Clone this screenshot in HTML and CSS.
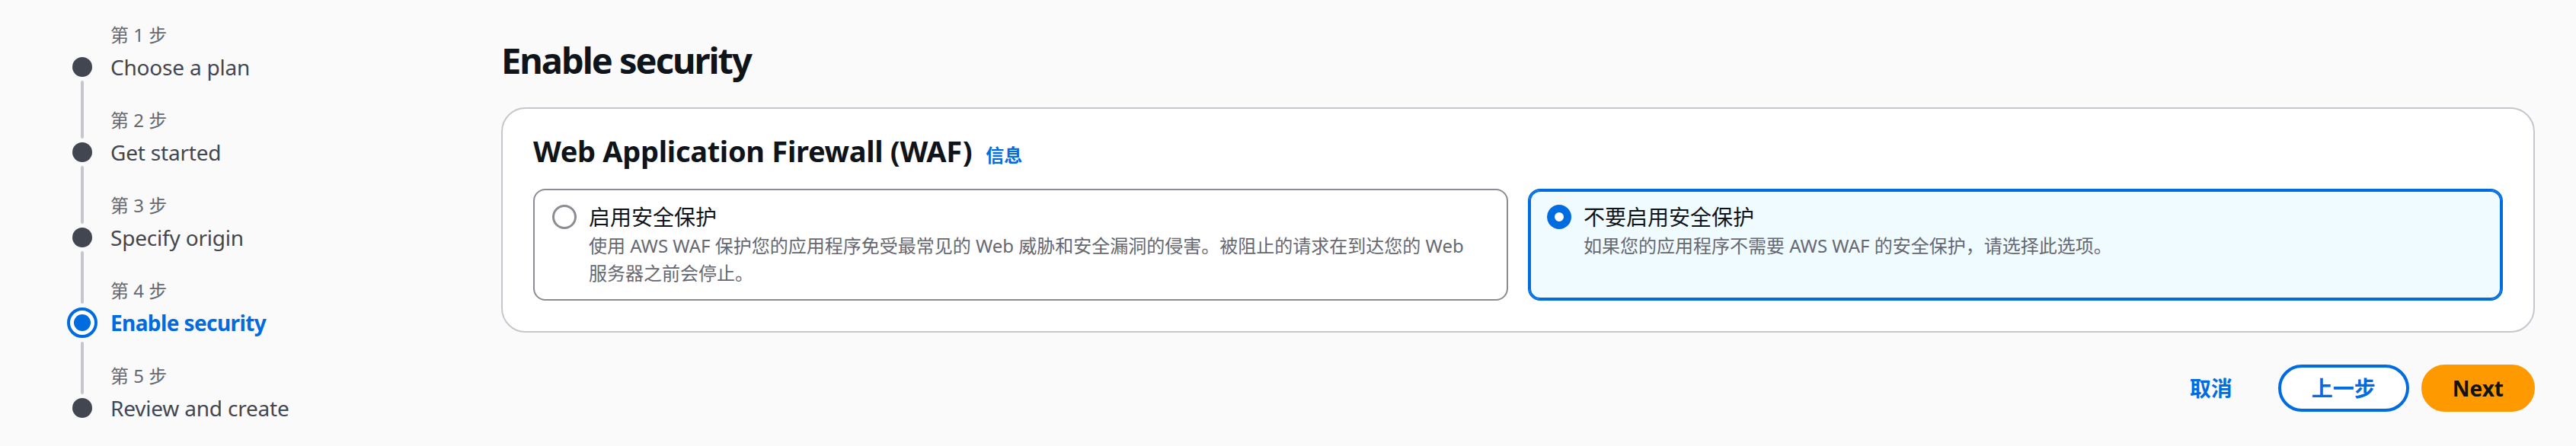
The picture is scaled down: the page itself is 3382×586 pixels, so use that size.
FILE: index.html
```html
<!DOCTYPE html>
<html lang="zh-CN">
<head>
<meta charset="utf-8">
<title>Enable security</title>
<link rel="stylesheet" href="styles.css">
</head>
<body>
<div class="page">
  <nav class="steps">
    <ol class="step-list">
      <li class="step">
        <span class="step-label">第 1 步</span>
        <span class="marker"></span>
        <span class="step-title">Choose a plan</span>
      </li>
      <li class="step">
        <span class="step-label">第 2 步</span>
        <span class="marker"></span>
        <span class="step-title">Get started</span>
      </li>
      <li class="step before-active">
        <span class="step-label">第 3 步</span>
        <span class="marker"></span>
        <span class="step-title">Specify origin</span>
      </li>
      <li class="step active">
        <span class="step-label">第 4 步</span>
        <span class="marker"><span class="marker-dot"></span></span>
        <span class="step-title">Enable security</span>
      </li>
      <li class="step last">
        <span class="step-label">第 5 步</span>
        <span class="marker"></span>
        <span class="step-title">Review and create</span>
      </li>
    </ol>
  </nav>
  <main class="content">
    <h1 class="page-title">Enable security</h1>
    <section class="card">
      <div class="card-header">
        <h2 class="card-title">Web Application Firewall (WAF)</h2>
        <a class="info-link">信息</a>
      </div>
      <div class="tiles">
        <div class="tile">
          <span class="radio"></span>
          <div class="tile-text">
            <div class="tile-title">启用安全保护</div>
            <div class="tile-desc">使用 AWS WAF 保护您的应用程序免受最常见的 Web 威胁和安全漏洞的侵害。被阻止的请求在到达您的 Web 服务器之前会停止。</div>
          </div>
        </div>
        <div class="tile selected">
          <span class="radio checked"></span>
          <div class="tile-text">
            <div class="tile-title">不要启用安全保护</div>
            <div class="tile-desc">如果您的应用程序不需要 AWS WAF 的安全保护，请选择此选项。</div>
          </div>
        </div>
      </div>
    </section>
    <div class="actions">
      <button class="btn btn-link">取消</button>
      <button class="btn btn-normal">上一步</button>
      <button class="btn btn-primary">Next</button>
    </div>
  </main>
</div>
</body>
</html>
```
FILE: styles.css
```css
* { box-sizing: border-box; }

html, body {
  margin: 0;
  padding: 0;
  background: #fafafa;
}

body {
  font-family: "Noto Sans", "Noto Sans CJK SC", sans-serif;
  color: #0f141a;
  width: 3382px;
  height: 586px;
  overflow: hidden;
}

.page {
  display: grid;
  grid-template-columns: 658px 1fr;
  padding-right: 54px;
}

/* ---------- Steps sidebar ---------- */
.steps {
  padding: 26px 0 0 90px;
}

.step-list {
  list-style: none;
  margin: 0;
  padding: 0;
}

.step {
  position: relative;
  display: grid;
  grid-template-columns: 36px 1fr;
  grid-template-rows: 40px 44px;
  column-gap: 19px;
  margin-bottom: 28px;
}

.step.last { margin-bottom: 0; }

.step::after {
  content: "";
  position: absolute;
  left: 16px;
  top: 80px;
  width: 4px;
  height: 76px;
  background: #c6c6cd;
  border-radius: 2px;
}

.step.before-active::after { height: 69px; }
.step.active::after { top: 87px; height: 69px; }
.step.last::after { display: none; }

.step-label {
  grid-column: 2;
  grid-row: 1;
  font-size: 24px;
  line-height: 40px;
  color: #656871;
  white-space: nowrap;
}

.marker {
  grid-column: 1;
  grid-row: 2;
  justify-self: center;
  align-self: center;
  width: 26px;
  height: 26px;
  border-radius: 50%;
  background: #424650;
}

.step-title {
  grid-column: 2;
  grid-row: 2;
  font-size: 28px;
  line-height: 44px;
  letter-spacing: -0.2px;
  color: #424650;
  white-space: nowrap;
}

.step.active .marker {
  width: 40px;
  height: 40px;
  background: #ffffff;
  border: 4px solid #006ce0;
  display: flex;
  align-items: center;
  justify-content: center;
}

.marker-dot {
  width: 22px;
  height: 22px;
  border-radius: 50%;
  background: #006ce0;
}

.step.active .step-title {
  color: #006ce0;
  font-weight: 700;
  letter-spacing: -0.6px;
}

/* ---------- Content ---------- */
.content {
  padding-top: 51px;
}

.page-title {
  margin: 0;
  font-size: 47px;
  line-height: 56px;
  font-weight: 700;
  letter-spacing: -2px;
  color: #0f141a;
}

.card {
  margin-top: 34px;
  background: #ffffff;
  border: 2px solid #c6c6cd;
  border-radius: 32px;
  padding: 33px 40px 40px;
}

.card-header {
  display: flex;
  align-items: baseline;
  gap: 18px;
  margin-bottom: 28px;
}

.card-title {
  margin: 0;
  font-size: 38px;
  line-height: 44px;
  font-weight: 700;
  letter-spacing: -0.3px;
  color: #0f141a;
}

.info-link {
  font-size: 24px;
  font-weight: 700;
  color: #006ce0;
}

.tiles {
  display: grid;
  grid-template-columns: 1fr 1fr;
  gap: 26px;
}

.tile {
  display: flex;
  align-items: flex-start;
  gap: 16px;
  border: 2px solid #8c8c94;
  border-radius: 16px;
  background: #ffffff;
  padding: 15px 24px 16px 23px;
}

.tile.selected {
  border-color: #006ce0;
  box-shadow: inset 0 0 0 2px #006ce0;
  background: #f0fbff;
}

.radio {
  flex: none;
  width: 32px;
  height: 32px;
  margin-top: 4px;
  border-radius: 50%;
  border: 3px solid #8c8c94;
  background: #ffffff;
}

.radio.checked {
  border: 10px solid #006ce0;
}

.tile-title {
  font-size: 28px;
  line-height: 40px;
  color: #0f141a;
}

.tile-desc {
  font-size: 24px;
  line-height: 36px;
  color: #656871;
  word-break: keep-all;
}

/* ---------- Actions ---------- */
.actions {
  display: flex;
  justify-content: flex-end;
  gap: 16px;
  margin-top: 42px;
}

.btn {
  font-family: "Noto Sans", "Noto Sans CJK SC", sans-serif;
  font-size: 28px;
  font-weight: 700;
  line-height: 40px;
  padding: 7px 40px;
  border: 4px solid transparent;
  border-radius: 32px;
  background: transparent;
  cursor: pointer;
}

.btn-link {
  color: #006ce0;
}

.btn-normal {
  color: #006ce0;
  border-color: #006ce0;
  background: #ffffff;
}

.btn-primary {
  color: #0f141a;
  background: #ff9900;
  border-color: #ff9900;
  padding: 7px 37px;
}
```
